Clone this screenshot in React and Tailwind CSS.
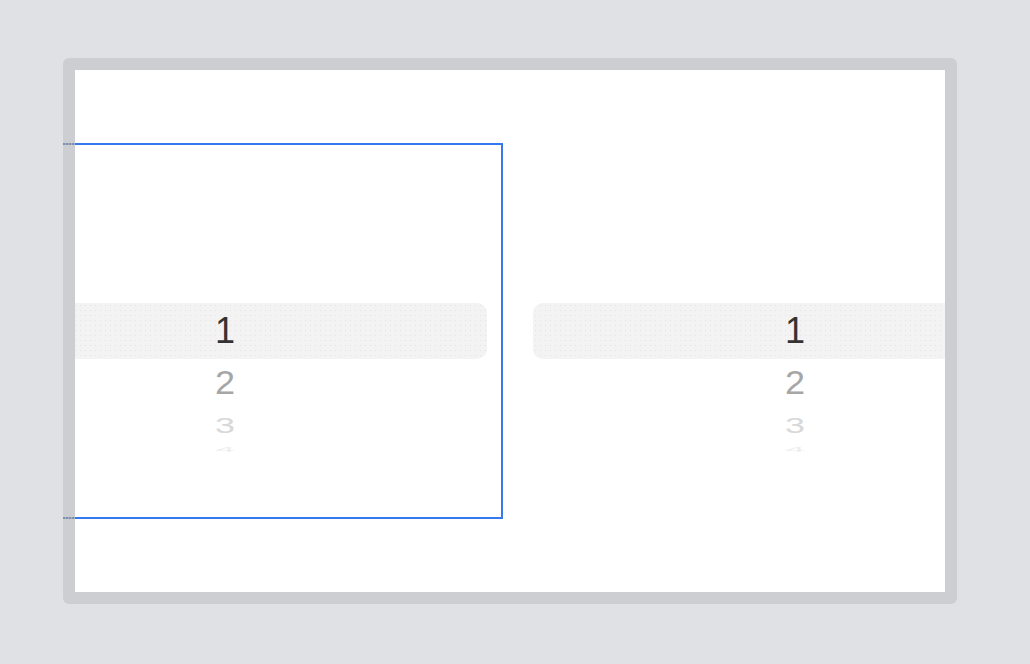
import React from "react";

function Wheel() {
  return (
    <div className="grid h-full grid-rows-[1fr_56px_1fr]">
      <div />
      <div className="flex items-center justify-center rounded-[10px] bg-[#f3f3f3] bg-[radial-gradient(#e4e4e4_0.6px,transparent_0.9px)] bg-[size:5px_5px]">
        <span className="text-[36px] leading-none text-[#333333]">1</span>
      </div>
      <div className="flex flex-col">
        <div className="flex h-[48px] items-center justify-center">
          <span className="scale-y-[0.92] text-[36px] leading-none text-[#a6a6a6]">2</span>
        </div>
        <div className="flex h-[38px] items-center justify-center">
          <span className="scale-y-[0.62] text-[36px] leading-none text-[#d8d8d8]">3</span>
        </div>
        <div className="flex h-[9px] items-center justify-center overflow-visible">
          <span className="scale-y-[0.2] text-[36px] leading-none text-[#eeeeee]">4</span>
        </div>
      </div>
    </div>
  );
}

export default function App() {
  return (
    <div
      className="h-[664px] w-[1030px] bg-[#e0e1e5] pl-[63px] pt-[58px]"
      style={{ fontFamily: '"Liberation Sans", Arial, sans-serif' }}
    >
      <div className="relative h-[546px] w-[894px] rounded-[6px] bg-[#cdced2] p-[12px]">
        <div className="flex h-full w-full items-center justify-center gap-[14px] overflow-hidden bg-white">
          <div className="h-[376px] w-[556px] shrink-0 border-2 border-[#3479f0] px-[14px]">
            <Wheel />
          </div>
          <div className="h-[376px] w-[556px] shrink-0 border-2 border-transparent px-[14px]">
            <Wheel />
          </div>
        </div>
        <div className="absolute left-0 top-[85px] h-[2px] w-[12px] bg-[repeating-linear-gradient(90deg,#7f8fb0_0_2px,#a9b0c0_2px_3px)]" />
        <div className="absolute left-0 top-[459px] h-[2px] w-[12px] bg-[repeating-linear-gradient(90deg,#7f8fb0_0_2px,#a9b0c0_2px_3px)]" />
      </div>
    </div>
  );
}
